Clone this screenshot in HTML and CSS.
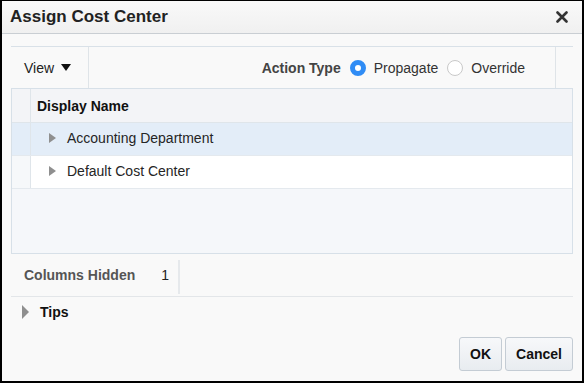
FILE: index.html
```html
<!DOCTYPE html>
<html>
  <head>
    <title>Assign Cost Center</title>
    <link rel="stylesheet" href="styles.css">
  </head>
  <body>
    <div class="dialog">
      <div class="title-bar">
        <h1>Assign Cost Center</h1>
        <svg class="close" width="12" height="12" viewBox="0 0 12 12">
          <path d="M1.5 1.5 L10.5 10.5 M10.5 1.5 L1.5 10.5" stroke="#333" stroke-width="2.6" stroke-linecap="round" />
        </svg>
      </div>

      <div class="content">
        <div class="toolbar">
          <div class="view-menu">View <span class="caret"></span></div>
          <div class="action-type">
            <span class="action-label">Action Type</span>
            <label class="radio"><span class="dot checked"></span>Propagate</label>
            <label class="radio"><span class="dot"></span>Override</label>
          </div>
        </div>

        <div class="table">
          <div class="row header">
            <div class="row-head"></div>
            <div class="cell">Display Name</div>
          </div>
          <div class="row selected">
            <div class="row-head"></div>
            <div class="cell"><span class="disclose"></span>Accounting Department</div>
          </div>
          <div class="row">
            <div class="row-head"></div>
            <div class="cell"><span class="disclose"></span>Default Cost Center</div>
          </div>
          <div class="table-empty"></div>
        </div>

        <div class="status">
          <div class="hidden-cols">
            <span class="status-label">Columns Hidden</span>
            <span class="status-value">1</span>
          </div>
        </div>

        <div class="tips">
          <span class="disclose big"></span>Tips
        </div>

        <div class="buttons">
          <button>OK</button>
          <button>Cancel</button>
        </div>
      </div>
    </div>
  </body>
</html>
```

FILE: styles.css
```css
body {
  margin: 0;
  background: #000;
  font-family: "Liberation Sans", Arial, sans-serif;
  color: #252525;
}
.dialog {
  margin: 1px 2px 2px 2px;
  height: 380px;
  background: #f9f9f9;
  display: flex;
  flex-direction: column;
}
.title-bar {
  height: 32px;
  display: flex;
  align-items: center;
  justify-content: space-between;
  padding: 0 14px 0 8px;
  background: linear-gradient(#f9f9f9, #f0f0f0);
  border-bottom: 1px solid #c9ced3;
}
h1 {
  margin: 0;
  font-size: 17px;
  font-weight: bold;
  color: #222;
}
.close {
  display: block;
}
.content {
  padding: 12px 9px 0 9px;
  flex: 1;
  display: flex;
  flex-direction: column;
}
.toolbar {
  height: 41px;
  border-top: 1px solid #d9e1e8;
  display: flex;
  align-items: stretch;
  font-size: 14px;
}
.view-menu {
  width: 64px;
  padding-left: 13px;
  display: flex;
  align-items: center;
  border-right: 1px solid #dfe4e8;
  color: #222;
}
.caret {
  display: inline-block;
  margin-left: 7px;
  border-left: 5px solid transparent;
  border-right: 5px solid transparent;
  border-top: 7px solid #111;
}
.action-type {
  flex: 1;
  display: flex;
  align-items: center;
  justify-content: flex-end;
  padding-right: 30px;
  border-right: 1px solid #dfe4e8;
  margin-right: 17px;
}
.action-label {
  font-weight: bold;
  color: #444;
  margin-right: 9px;
}
.radio {
  display: flex;
  align-items: center;
  color: #333;
}
.dot {
  width: 16px;
  height: 16px;
  border-radius: 50%;
  border: 1px solid #c9c9c9;
  background: #fff;
  margin-right: 8px;
  box-sizing: border-box;
}
.dot.checked {
  border: 5px solid #2f8cf5;
  background: #fff;
}
.radio + .radio .dot {
  margin-left: 9px;
}
.table {
  border: 1px solid #d7e0e8;
  height: 164px;
  display: flex;
  flex-direction: column;
  background: #f5f7fa;
  font-size: 14px;
}
.row {
  display: flex;
  height: 32px;
  border-bottom: 1px solid #e4e9ee;
  background: #fff;
}
.row-head {
  width: 18px;
  border-right: 1px solid #dfe5ea;
  background: #f6f8fa;
}
.cell {
  flex: 1;
  display: flex;
  align-items: center;
  padding-left: 6px;
  padding-bottom: 3px;
}
.header {
  height: 33px;
  background: #f3f4f7;
  border-bottom: 1px solid #dfe5ea;
}
.header .cell {
  font-weight: bold;
  color: #111;
  padding-bottom: 0;
  padding-top: 1px;
}
.header .row-head {
  background: #f3f4f7;
}
.selected,
.selected .row-head {
  background: #e3edf8;
}
.disclose {
  display: inline-block;
  border-top: 5px solid transparent;
  border-bottom: 5px solid transparent;
  border-left: 7px solid #8f8f8f;
  margin: 0 11px 0 12px;
}
.table-empty {
  flex: 1;
}
.status {
  height: 38px;
  border-bottom: 1px solid #e3e6e9;
  display: flex;
  align-items: center;
  margin-top: 4px;
}
.hidden-cols {
  height: 34px;
  display: flex;
  align-items: center;
  border-right: 2px solid #e6e9ec;
  padding: 0 9px 4px 13px;
  box-sizing: border-box;
  font-size: 14px;
}
.status-label {
  font-weight: bold;
  color: #555;
  margin-right: 26px;
}
.status-value {
  color: #222;
}
.tips {
  display: flex;
  align-items: center;
  height: 30px;
  font-size: 14px;
  font-weight: bold;
  color: #111;
}
.disclose.big {
  border-top-width: 7px;
  border-bottom-width: 7px;
  border-left-width: 7px;
  margin: 0 11px 0 11px;
}
.buttons {
  display: flex;
  justify-content: flex-end;
  gap: 3px;
  margin-top: 10px;
}
button {
  font-family: "Liberation Sans", Arial, sans-serif;
  font-size: 14px;
  font-weight: bold;
  color: #111;
  height: 34px;
  padding: 0 10px;
  border: 1px solid #c4ccd4;
  border-radius: 3px;
  background: linear-gradient(#f7f8fa, #e8ecf0);
}
```
